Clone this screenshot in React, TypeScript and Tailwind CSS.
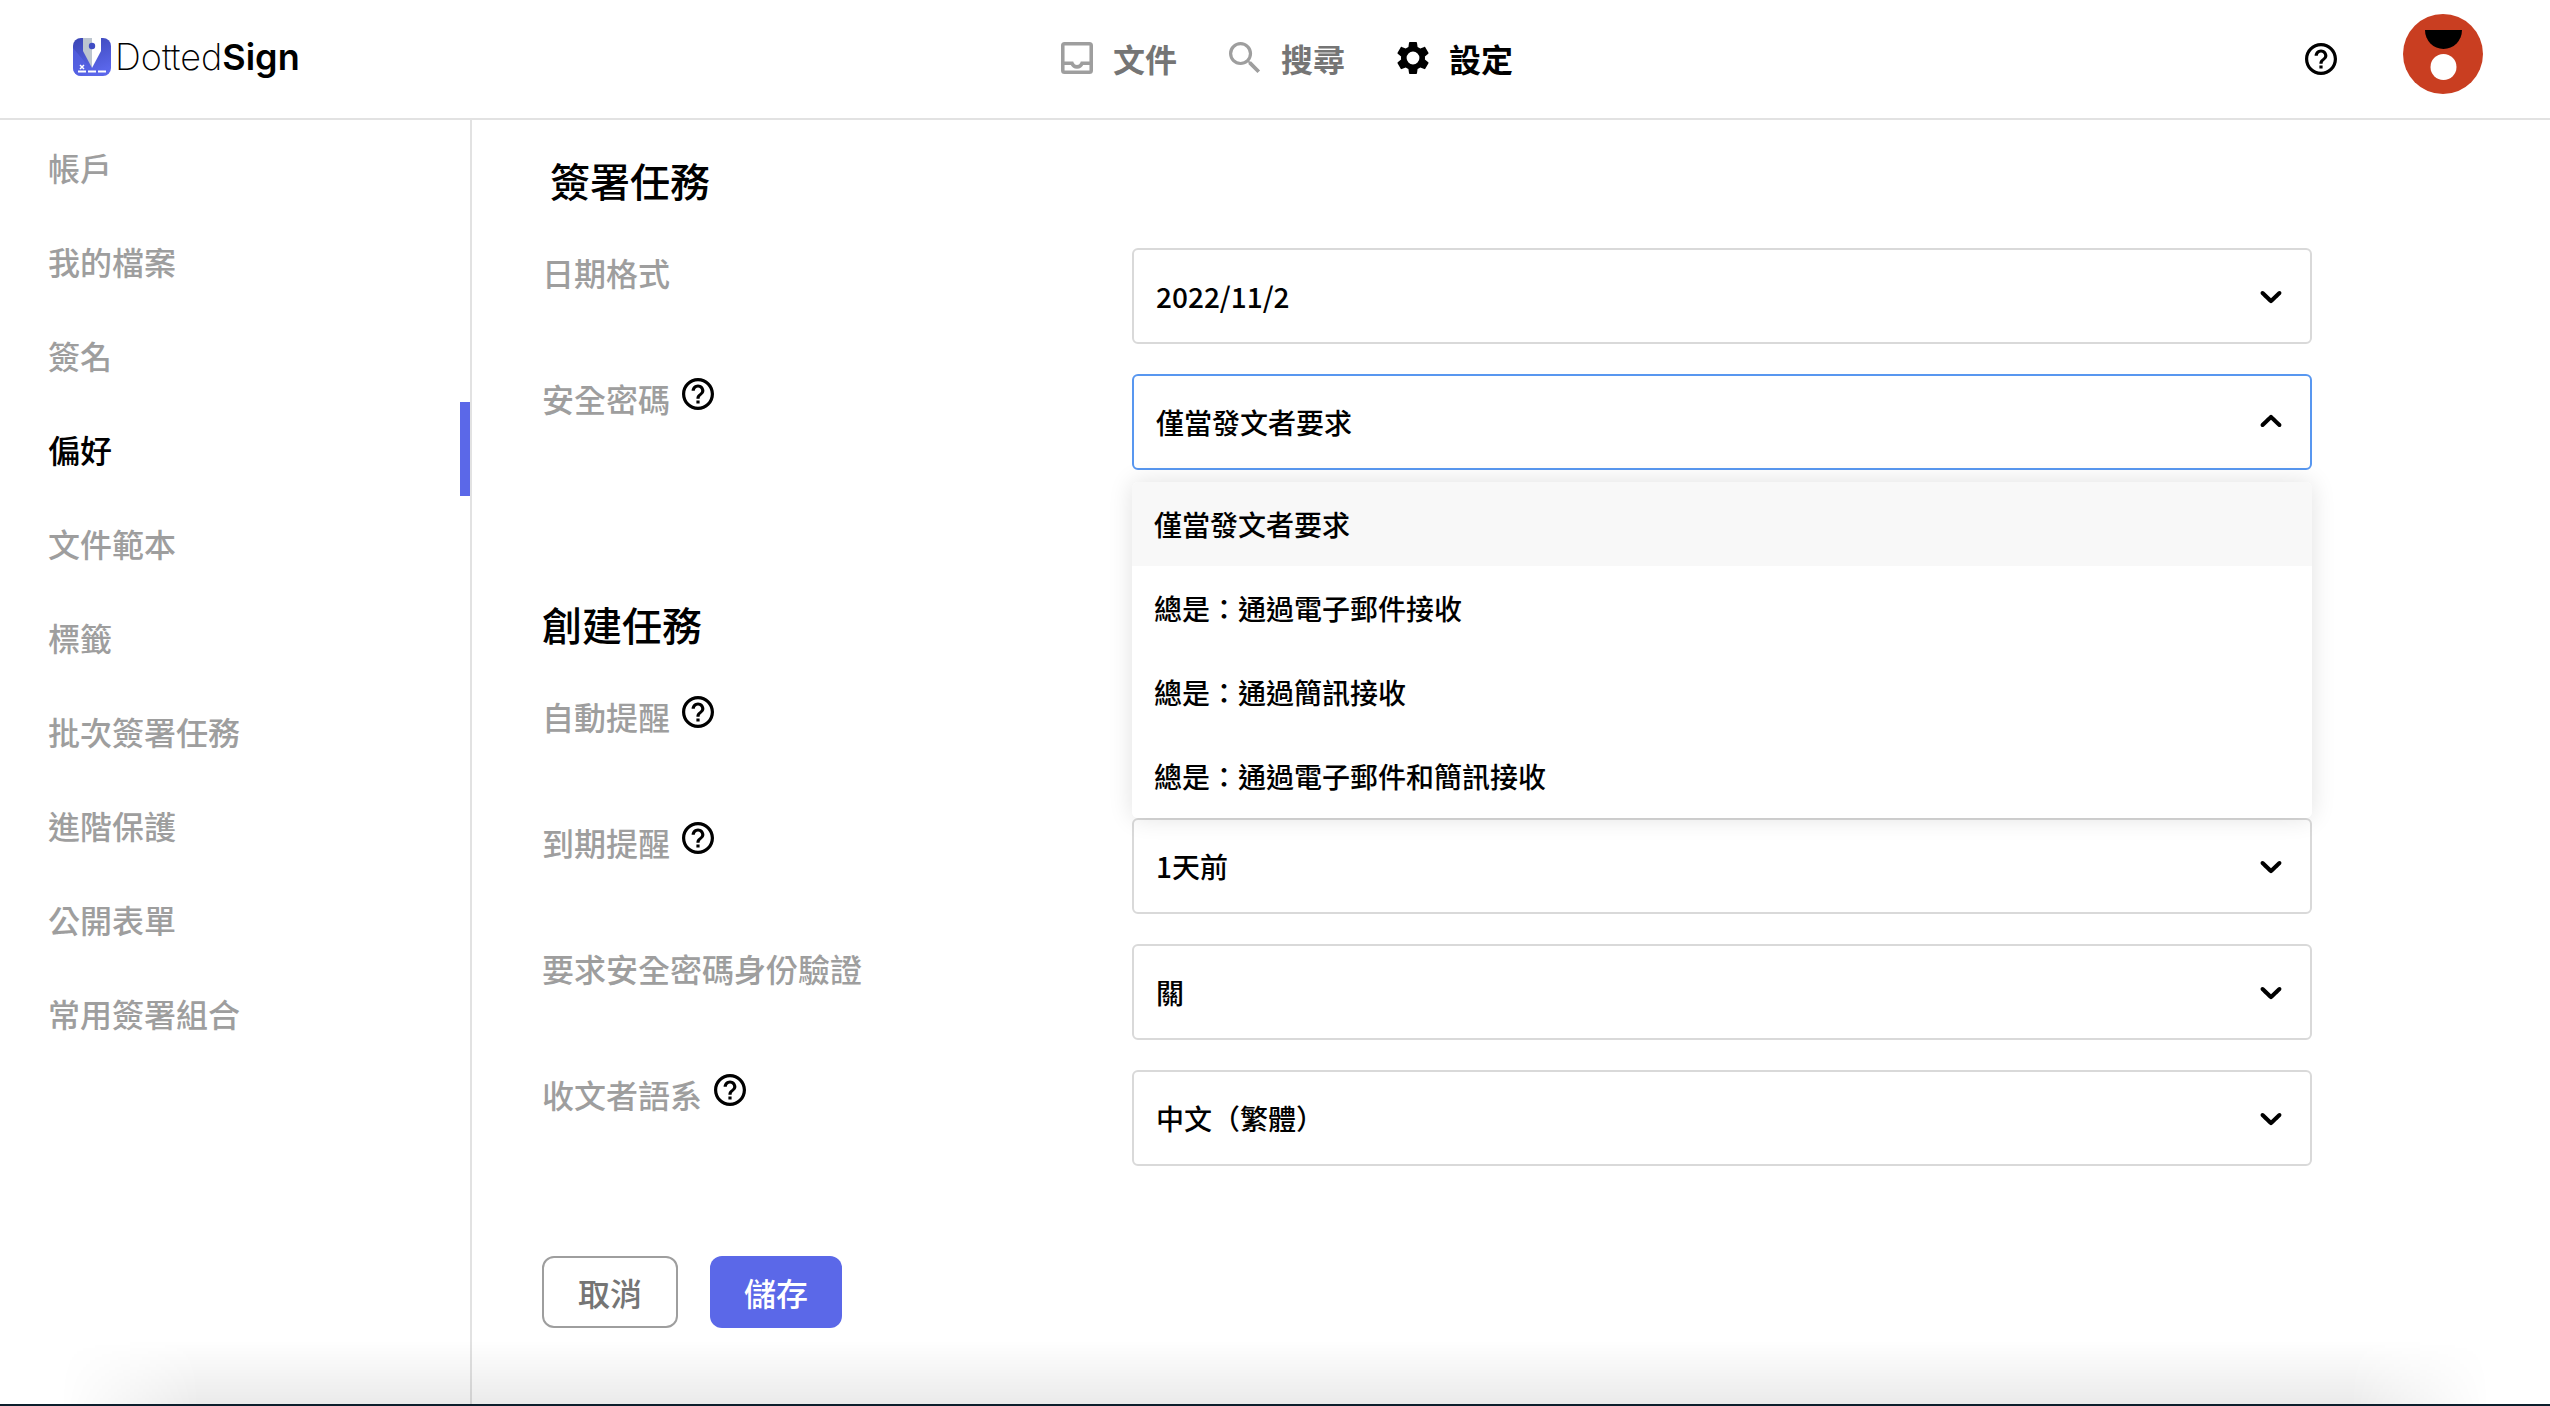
import { ReactNode } from "react";

const menuItems = [
  "帳戶",
  "我的檔案",
  "簽名",
  "偏好",
  "文件範本",
  "標籤",
  "批次簽署任務",
  "進階保護",
  "公開表單",
  "常用簽署組合",
];

const securityOptions = [
  "僅當發文者要求",
  "總是：通過電子郵件接收",
  "總是：通過簡訊接收",
  "總是：通過電子郵件和簡訊接收",
];

function HelpIcon() {
  return (
    <svg viewBox="2 2 20 20" className="size-8 fill-black" aria-hidden="true">
      <path d="M11 18h2v-2h-2v2zm1-16C6.48 2 2 6.48 2 12s4.48 10 10 10 10-4.48 10-10S17.52 2 12 2zm0 18c-4.41 0-8-3.59-8-8s3.59-8 8-8 8 3.59 8 8-3.59 8-8 8zm0-14c-2.21 0-4 1.79-4 4h2c0-1.1.9-2 2-2s2 .9 2 2c0 2-3 1.75-3 5h2c0-2.25 3-2.5 3-5 0-2.21-1.79-4-4-4z" />
    </svg>
  );
}

function Chevron({ open = false }: { open?: boolean }) {
  return (
    <svg
      viewBox="0 0 20 20"
      className={`pointer-events-none absolute right-[23px] top-[30px] size-9 fill-black ${open ? "rotate-180" : ""}`}
      aria-hidden="true"
    >
      <path d="M4.516 7.548c0.436-0.446 1.043-0.481 1.576 0l3.908 3.747 3.908-3.747c0.533-0.481 1.141-0.446 1.574 0 0.436 0.445 0.408 1.197 0 1.615-0.406 0.418-4.695 4.502-4.695 4.502-0.217 0.223-0.502 0.335-0.787 0.335s-0.57-0.112-0.789-0.335c0 0-4.287-4.084-4.695-4.502s-0.436-1.17 0-1.615z" />
    </svg>
  );
}

function Logo() {
  return (
    <a href="#" className="mb-1 flex items-center gap-1" aria-label="DottedSign">
      <svg viewBox="0 0 38 38" className="size-[38px]" aria-hidden="true">
        <defs>
          <linearGradient id="logo-bg" x1="0" y1="0" x2="0.4" y2="1">
            <stop offset="0" stopColor="#3a45b4" />
            <stop offset="1" stopColor="#5a66ea" />
          </linearGradient>
        </defs>
        <rect width="38" height="38" rx="8" fill="url(#logo-bg)" />
        <path d="M0 10L17 30L8 38A8 8 0 0 1 0 30z" fill="#5562e4" opacity="0.7" />
        <path d="M10 0h9v30L10 13z" fill="#bcc5cf" />
        <path d="M19 0h9v13L19 30z" fill="#fff" />
        <circle cx="19" cy="8" r="3.2" fill="#3f4cc4" />
        <path d="M7 27l4 4M11 27l-4 4" stroke="#fff" strokeWidth="1.5" />
        <path d="M5 33.5h8M15 33.5h8M25 33.5h8" stroke="#fff" strokeWidth="1.8" />
      </svg>
      <span className="font-['Inter',sans-serif] text-4xl leading-none text-black">
        <span className="font-extralight">Dotted</span>
        <span className="font-semibold">Sign</span>
      </span>
    </a>
  );
}

function NavLink({ label, active = false, children }: { label: string; active?: boolean; children: ReactNode }) {
  return (
    <a href="#" className={`flex items-center gap-5 text-[32px] font-bold ${active ? "text-black" : "text-[#757575]"}`}>
      {children}
      {label}
    </a>
  );
}

function Header() {
  return (
    <header className="grid h-[120px] grid-cols-[1fr_auto_1fr] items-center border-b-2 border-[#e2e2e2] pl-[73px] pr-[67px]">
      <Logo />
      <nav className="mb-0.5 flex items-center gap-[52px] pl-[18px]">
        <NavLink label="文件">
          <svg viewBox="3 3 18 18" className="size-8 fill-none stroke-[#9e9e9e] stroke-2" aria-hidden="true">
            <rect x="4" y="4" width="16" height="16" rx="1" />
            <path d="M4 15h5.200c.5 1.300 1.500 2 2.800 2s2.300-.7 2.800-2H20" />
          </svg>
        </NavLink>
        <NavLink label="搜尋">
          <svg viewBox="3 3 18 18" className="size-8 fill-[#9e9e9e]" aria-hidden="true">
            <path d="M15.5 14h-.79l-.28-.27C15.41 12.59 16 11.11 16 9.5 16 5.91 13.09 3 9.5 3S3 5.91 3 9.5 5.91 16 9.5 16c1.61 0 3.09-.59 4.23-1.57l.27.28v.79l5 4.99L20.49 19l-4.99-5zm-6 .2a4.7 4.7 0 1 1 0-9.400 4.7 4.7 0 0 1 0 9.400z" />
          </svg>
        </NavLink>
        <NavLink label="設定" active>
          <svg viewBox="2 2 20 20" className="size-8 fill-black" aria-hidden="true">
            <path d="M19.43 12.98c.04-.32.07-.64.07-.98s-.03-.66-.07-.98l2.11-1.65c.19-.15.24-.42.12-.64l-2-3.46c-.12-.22-.39-.3-.61-.22l-2.49 1c-.52-.4-1.08-.73-1.69-.98l-.38-2.65C14.46 2.18 14.25 2 14 2h-4c-.25 0-.46.18-.49.42l-.38 2.65c-.61.25-1.17.59-1.69.98l-2.49-1c-.23-.09-.49 0-.61.22l-2 3.46c-.13.22-.07.49.12.64l2.11 1.65c-.04.32-.07.65-.07.98s.03.66.07.98l-2.11 1.65c-.19.15-.24.42-.12.64l2 3.46c.12.22.39.3.61.22l2.49-1c.52.4 1.08.73 1.69.98l.38 2.65c.03.24.24.42.49.42h4c.25 0 .46-.18.49-.42l.38-2.65c.61-.25 1.17-.59 1.69-.98l2.49 1c.23.09.49 0 .61-.22l2-3.46c.12-.22.07-.49-.12-.64zM12 16a4 4 0 1 1 0-8 4 4 0 0 1 0 8z" />
          </svg>
        </NavLink>
      </nav>
      <div className="flex items-center justify-end gap-[66px]">
        <button type="button" aria-label="說明">
          <HelpIcon />
        </button>
        <button type="button" aria-label="個人檔案" className="mb-2.5">
          <svg viewBox="0 0 80 80" className="size-20" aria-hidden="true">
            <circle cx="40" cy="40" r="40" fill="#c93e21" />
            <path d="M22 16h37a18.500 19 0 0 1-37 0z" fill="#000" />
            <circle cx="40.5" cy="53" r="13" fill="#fff" />
          </svg>
        </button>
      </div>
    </header>
  );
}

function Sidebar() {
  return (
    <aside className="w-[472px] shrink-0 border-r-2 border-[#e2e2e2]">
      <nav>
        {menuItems.map((item) => (
          <a
            key={item}
            href="#"
            className={`flex h-[94px] items-center border-r-[10px] pl-12 text-[32px] font-medium ${
              item === "偏好" ? "border-[#5b68e8] text-black" : "border-transparent text-[#9e9e9e]"
            }`}
          >
            {item}
          </a>
        ))}
      </nav>
    </aside>
  );
}

type FieldProps = {
  id: string;
  label: string;
  value: string;
  help?: boolean;
  options?: string[];
};

function Field({ id, label, value, help = false, options }: FieldProps) {
  return (
    <div className="grid grid-cols-3 items-start">
      <div className="flex items-start gap-3">
        <label htmlFor={id} className="text-[32px] leading-[48px] font-medium text-[#9e9e9e]">
          {label}
        </label>
        {help && (
          <button type="button" aria-label={`${label}說明`} className="pt-1">
            <HelpIcon />
          </button>
        )}
      </div>
      <div className="relative col-span-2">
        <select
          id={id}
          defaultValue={value}
          className={`h-24 w-full appearance-none rounded-md border-2 bg-white px-[22px] text-[28px] font-medium text-black outline-none ${
            options ? "border-[#5897f0]" : "border-[#d9d9d9]"
          }`}
        >
          {(options ?? [value]).map((option) => (
            <option key={option}>{option}</option>
          ))}
        </select>
        <Chevron open={!!options} />
        {options && (
          <ul className="absolute inset-x-0 top-full z-10 mt-3 overflow-hidden rounded-md bg-white shadow-[0_0_24px_rgba(0,0,0,0.12)]">
            {options.map((option) => (
              <li key={option}>
                <button
                  type="button"
                  className={`h-[84px] w-full px-[22px] text-left text-[28px] font-medium text-black ${
                    option === value ? "bg-[#f8f8f8]" : "bg-white"
                  }`}
                >
                  {option}
                </button>
              </li>
            ))}
          </ul>
        )}
      </div>
    </div>
  );
}

export default function App() {
  return (
    <div className="flex min-h-screen flex-col bg-white font-['Noto_Sans_CJK_TC','Noto_Sans',sans-serif]">
      <Header />
      <div className="flex flex-1">
        <Sidebar />
        <main className="flex-1 pl-[70px] pr-[238px] pt-[30px]">
          <h2 className="pl-2 text-[40px] leading-[60px] font-medium text-black">簽署任務</h2>
          <form>
            <div className="mt-[38px] flex flex-col gap-[30px]">
              <Field id="date-format" label="日期格式" value="2022/11/2" />
              <Field id="security-code" label="安全密碼" value="僅當發文者要求" help options={securityOptions} />
            </div>
            <h2 className="mt-[124px] text-[40px] leading-[60px] font-medium text-black">創建任務</h2>
            <div className="mt-[38px] flex flex-col gap-[30px]">
              <Field id="auto-reminder" label="自動提醒" value="關" help />
              <Field id="expiry-reminder" label="到期提醒" value="1天前" help />
              <Field id="require-code" label="要求安全密碼身份驗證" value="關" />
              <Field id="language" label="收文者語系" value="中文（繁體）" help />
            </div>
            <div className="mt-[90px] flex gap-8">
              <button
                type="button"
                className="h-[72px] rounded-xl border-2 border-[#9e9e9e] px-[34px] text-[32px] font-medium text-[#757575]"
              >
                取消
              </button>
              <button type="submit" className="h-[72px] rounded-xl bg-[#5b68e8] px-[34px] text-[32px] font-medium text-white">
                儲存
              </button>
            </div>
          </form>
        </main>
      </div>
      {/* Bottom edge */}
      <div className="pointer-events-none fixed inset-x-0 bottom-0">
        <div className="h-16 bg-linear-to-t from-black/8 to-transparent mask-[linear-gradient(to_right,transparent_60px,black_200px,black_calc(100%-200px),transparent_calc(100%-60px))]" />
        <div className="h-0.5 bg-[#0c1e2c]" />
      </div>
    </div>
  );
}
